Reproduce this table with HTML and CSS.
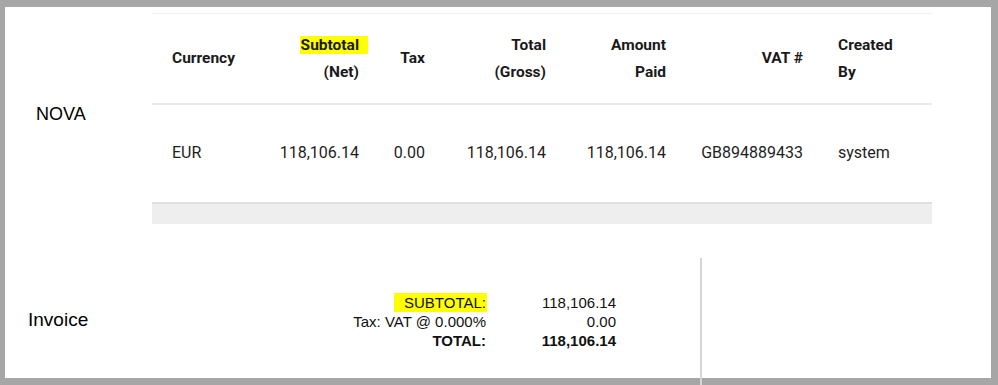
FILE: index.html
```html
<!DOCTYPE html>
<html>
<head>
<meta charset="utf-8">
<link rel="stylesheet" href="styles.css">
</head>
<body>
<div class="panel">
  <section class="top">
    <div class="label label-nova">NOVA</div>
    <div class="table">
      <div class="row head">
        <div class="cell c1 left">Currency</div>
        <div class="cell c2 right"><span class="hl">Subtotal</span><br>(Net)</div>
        <div class="cell c3 right">Tax</div>
        <div class="cell c4 right">Total<br>(Gross)</div>
        <div class="cell c5 right">Amount<br>Paid</div>
        <div class="cell c6 right">VAT #</div>
        <div class="cell c7 left">Created<br>By</div>
      </div>
      <div class="row body">
        <div class="cell c1 left">EUR</div>
        <div class="cell c2 right">118,106.14</div>
        <div class="cell c3 right">0.00</div>
        <div class="cell c4 right">118,106.14</div>
        <div class="cell c5 right">118,106.14</div>
        <div class="cell c6 right">GB894889433</div>
        <div class="cell c7 left">system</div>
      </div>
      <div class="footbar"></div>
    </div>
  </section>
  <section class="bottom">
    <div class="label label-invoice">Invoice</div>
    <div class="totals">
      <div class="t-label"><span class="hl2">SUBTOTAL:</span></div>
      <div class="t-val">118,106.14</div>
      <div class="t-label">Tax: VAT @ 0.000%</div>
      <div class="t-val">0.00</div>
      <div class="t-label strong">TOTAL:</div>
      <div class="t-val strong">118,106.14</div>
    </div>
    <div class="vline"></div>
  </section>
</div>
</body>
</html>
```

FILE: styles.css
```css
html, body {
  margin: 0;
  padding: 0;
}
body {
  background: #a6a6a6;
  width: 998px;
  height: 385px;
  overflow: hidden;
  padding: 7px 7px 7px 5px;
  box-sizing: border-box;
}
.panel {
  background: #ffffff;
  width: 986px;
  height: 371px;
  display: flex;
  flex-direction: column;
}
.top {
  display: flex;
  padding-top: 6px;
  height: 217px;
  box-sizing: border-box;
}
.label {
  font-family: "Liberation Sans", Arial, sans-serif;
  color: #000;
}
.label-nova {
  width: 147px;
  box-sizing: border-box;
  padding-left: 31px;
  padding-top: 91px;
  font-size: 18px;
  line-height: 21px;
}
.table {
  width: 780px;
  border-top: 1px solid #f2f2f2;
  font-family: Roboto, "Noto Sans", sans-serif;
  color: #1e1e1e;
  font-size: 15.5px;
}
.row {
  display: grid;
  grid-template-columns: 110px 113px 66px 121px 120px 136px 114px;
  align-items: center;
}
.head {
  height: 89px;
  border-bottom: 2px solid #e9e9e9;
  font-weight: 700;
  line-height: 27px;
  color: #1a1a1a;
}
.body {
  height: 97px;
  line-height: 20px;
  font-size: 16px;
  padding-bottom: 1px;
  box-sizing: border-box;
}
.cell.left {
  text-align: left;
  padding-left: 20px;
}
.cell.right {
  text-align: right;
  padding-right: 16px;
}
.cell.c6 {
  padding-right: 15px;
}
.hl {
  background: #ffff00;
  display: inline-block;
  line-height: 18px;
  padding-left: 1px;
  padding-right: 9px;
  margin-right: -9px;
}
.footbar {
  height: 20px;
  background: #eeeeee;
  border-top: 2px solid #e0e0e0;
}
.bottom {
  display: flex;
  align-items: flex-start;
  flex: 1;
}
.label-invoice {
  width: 332px;
  box-sizing: border-box;
  padding-left: 23px;
  margin-top: 85px;
  font-size: 19px;
  line-height: 22px;
}
.totals {
  margin-top: 69px;
  display: grid;
  grid-template-columns: 150px 129px;
  font-family: "Liberation Sans", Arial, sans-serif;
  font-size: 15px;
  line-height: 19px;
  color: #111;
}
.t-label, .t-val {
  text-align: right;
}
.t-label {
  padding-right: 1px;
}
.strong {
  font-weight: 700;
}
.hl2 {
  background: #ffff00;
  display: inline-block;
  padding-left: 10px;
  padding-right: 1px;
  margin-right: -1px;
}
.vline {
  align-self: flex-end;
  width: 2px;
  height: 127px;
  margin-bottom: -7px;
  margin-left: 84px;
  background: #d6d6d6;
}
```
